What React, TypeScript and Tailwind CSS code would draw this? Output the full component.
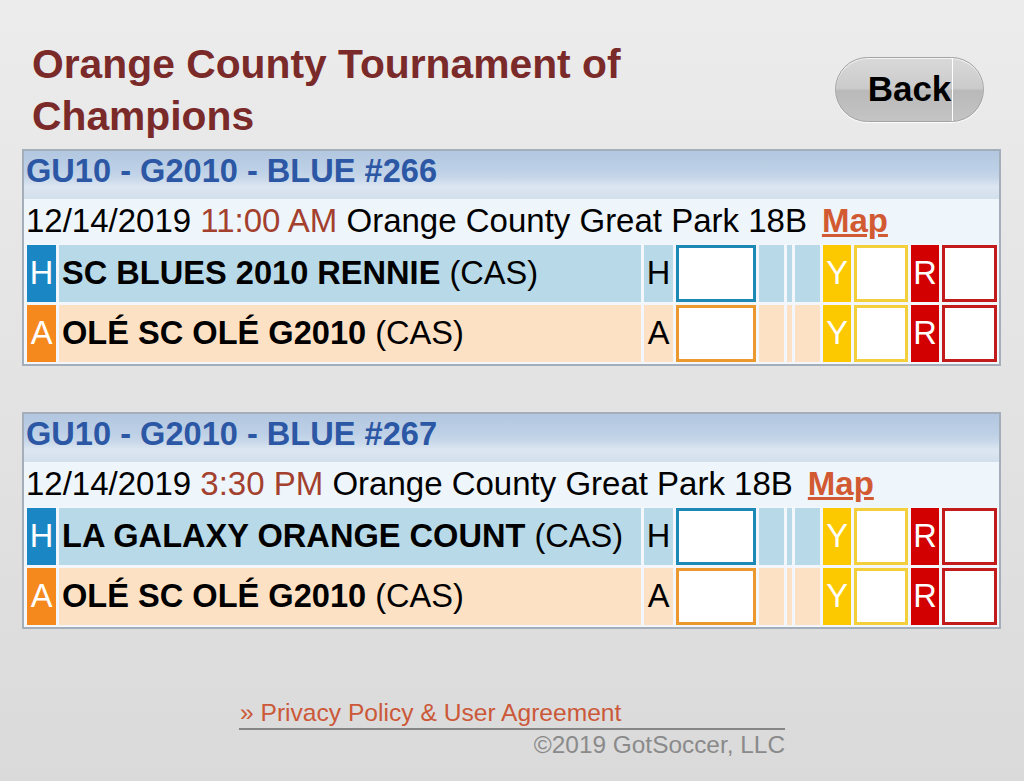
import React from "react";

type Side = "H" | "A";

function TeamRow({ side, name }: { side: Side; name: string }) {
  const home = side === "H";
  const rowBg = home ? "bg-[#b8d9e7]" : "bg-[#fde1c4]";
  return (
    <div className="flex h-[57px] gap-[3px] text-[32.6px] leading-none">
      <div
        className={`w-[29px] flex items-center justify-center text-white ${
          home ? "bg-[#1b86c4]" : "bg-[#f5891e]"
        }`}
      >
        {side}
      </div>
      <div className={`flex-1 flex items-center pl-[3px] text-black whitespace-nowrap ${rowBg}`}>
        <span className="font-bold">{name}</span>
        <span>&nbsp;(CAS)</span>
      </div>
      <div className={`w-[29px] flex items-center justify-center text-black ${rowBg}`}>{side}</div>
      <div
        className={`w-[80px] bg-white border-[3px] ${
          home ? "border-[#1b88b6]" : "border-[#eb982f]"
        }`}
      />
      <div className={`w-[25px] ${rowBg}`} />
      <div className={`w-[5px] ${rowBg}`} />
      <div className={`w-[25px] ${rowBg}`} />
      <div className="w-[28px] flex items-center justify-center text-white bg-[#fcc800]">Y</div>
      <div className="w-[54px] bg-white border-[3px] border-[#f3cf3c]" />
      <div className="w-[28px] flex items-center justify-center text-white bg-[#d20000]">R</div>
      <div className="w-[55px] bg-white border-[3px] border-[#c11b1b]" />
    </div>
  );
}

function GameTable({
  title,
  time,
  home,
  away,
}: {
  title: string;
  time: string;
  home: string;
  away: string;
}) {
  return (
    <div className="ml-[22px] w-[979px] border-2 border-[#a4adba] bg-[#f3f7fb]">
      <div className="h-[48px] pl-[2px] bg-[linear-gradient(to_bottom,#b2c7e0_0%,#bdd0e6_40%,#c9d8ea_58%,#dce6f1_74%,#d3dfec_100%)]">
        <div className="text-[32.6px] leading-[40px] font-bold text-[#2c57a4]">{title}</div>
      </div>
      <div className="h-[45px] pl-[2px] bg-[#eef5fb] text-[33px] leading-[44px] text-black whitespace-nowrap">
        12/14/2019 <span className="text-[#a3402e]">{time}</span> Orange County Great Park 18B
        <span className="ml-[15px] font-bold underline text-[#d25a32]">Map</span>
      </div>
      <div className="flex flex-col gap-[3px] pt-[1px] pb-[2px] pl-[3px] pr-[2px]">
        <TeamRow side="H" name={home} />
        <TeamRow side="A" name={away} />
      </div>
    </div>
  );
}

export default function App() {
  return (
    <div
      className="w-[1024px] h-[781px] overflow-hidden bg-[linear-gradient(to_bottom,#ececec,#dadada)]"
      style={{ fontFamily: '"Liberation Sans", Arial, sans-serif' }}
    >
      <div className="flex items-start justify-between pt-[38px]">
        <h1 className="pl-[32px] w-[700px] text-[40.8px] leading-[52px] font-bold text-[#7b2a2a]">
          Orange County Tournament of Champions
        </h1>
        <div className="relative mt-[19px] mr-[40px] w-[149px] h-[65px] rounded-full border border-[#a3a3a3] bg-[linear-gradient(to_bottom,#d9d9d9_0%,#cbcbcb_48%,#b9b9b9_52%,#c4c4c4_100%)] shadow-[inset_0_1px_0_#f4f4f4,0_1px_1px_rgba(255,255,255,0.9)] flex items-center justify-center text-[35px] font-bold text-black">
          Back
          <div className="absolute top-0 bottom-0 left-[116px] w-[1px] bg-white" />
        </div>
      </div>
      <div className="mt-[7px]">
        <GameTable title="GU10 - G2010 - BLUE #266" time="11:00 AM" home="SC BLUES 2010 RENNIE" away="OLÉ SC OLÉ G2010" />
      </div>
      <div className="mt-[46px]">
        <GameTable title="GU10 - G2010 - BLUE #267" time="3:30 PM" home="LA GALAXY ORANGE COUNT" away="OLÉ SC OLÉ G2010" />
      </div>
      <div className="mt-[68px] ml-[239px] w-[546px]">
        <div className="border-b-2 border-[#858585] pl-[1px] text-[24.6px] leading-[31px] text-[#cb5838] whitespace-nowrap">
          » Privacy Policy &amp; User Agreement
        </div>
        <div className="text-right text-[24.4px] leading-[30px] text-[#8a8a8a]">©2019 GotSoccer, LLC</div>
      </div>
    </div>
  );
}
